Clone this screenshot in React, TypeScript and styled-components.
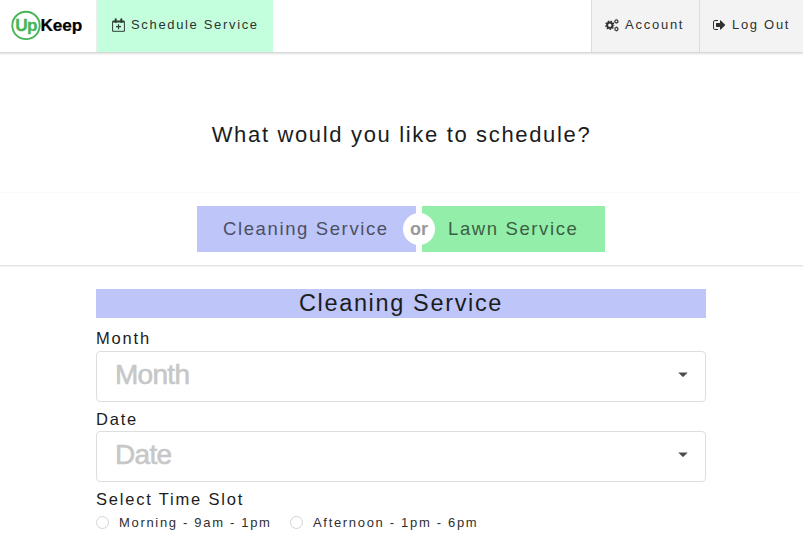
import React from 'react';
import styled, { createGlobalStyle } from 'styled-components';

const GlobalStyle = createGlobalStyle`
  *, *::before, *::after { box-sizing: border-box; }
  html, body { margin: 0; padding: 0; overflow: hidden; }
  body {
    background: #fff;
    color: #1b1c1d;
    font-family: "Liberation Sans", Arial, Helvetica, sans-serif;
  }
`;

const Page = styled.div`
  width: 100%;
  height: 100vh;
  overflow: hidden;
`;

const Header = styled.header`
  display: flex;
  height: 53px;
  border-bottom: 1px solid #d9d9d9;
  box-shadow: 0 1px 2px rgba(34, 36, 38, 0.15);
`;

const Brand = styled.a`
  display: flex;
  align-items: center;
  width: 97px;
  padding-left: 11px;
  border-right: 1px solid #eeeeee;
`;

const NavItem = styled.a<{ $tone: string; $width: number; $divided?: boolean; $spacing: number }>`
  display: flex;
  align-items: center;
  width: ${p => p.$width}px;
  padding: 0 0 3px ${p => (p.$divided ? 13 : 15)}px;
  background: ${p => p.$tone};
  border-left: ${p => (p.$divided ? '1px solid #dcdcdc' : '0')};
  color: #303132;
  font-size: 13px;
  letter-spacing: ${p => p.$spacing}px;
  white-space: nowrap;
  svg { flex: none; }
`;

const NavText = styled.span<{ $gap: number }>`
  margin-left: ${p => p.$gap}px;
`;

const RightMenu = styled.nav`
  display: flex;
  margin-left: auto;
`;

const Question = styled.h1`
  display: flex;
  align-items: center;
  justify-content: center;
  height: 140px;
  margin: 0;
  padding: 24px 0 0 0;
  border-bottom: 1px solid #fafafa;
  font-size: 22px;
  font-weight: 400;
  letter-spacing: 1.66px;
`;

const Choices = styled.section`
  display: flex;
  justify-content: center;
  align-items: flex-start;
  height: 73px;
  padding: 13px 1px 0 0;
  border-bottom: 1px solid #e2e2e3;
  box-shadow: 0 1px 1px rgba(34, 36, 38, 0.06);
`;

const Choice = styled.button<{ $tone: string; $ink: string; $width: number; $left: number }>`
  width: ${p => p.$width}px;
  height: 46px;
  padding: 0 0 1px ${p => p.$left}px;
  border: 0;
  background: ${p => p.$tone};
  color: ${p => p.$ink};
  font: 400 18.5px "Liberation Sans", Arial, sans-serif;
  letter-spacing: 1.62px;
  text-align: left;
  white-space: nowrap;
`;

const OrGap = styled.div`
  position: relative;
  width: 6px;
  height: 46px;
`;

const OrBadge = styled.span`
  position: absolute;
  top: 7px;
  left: -13px;
  width: 32px;
  height: 32px;
  border-radius: 50%;
  background: #fff;
  color: #999;
  font-size: 18px;
  font-weight: 700;
  line-height: 32px;
  text-align: center;
`;

const Form = styled.form`
  width: 610px;
  margin: 23px 0 0 96px;
`;

const FormTitle = styled.h2`
  height: 29px;
  margin: 0 0 9px;
  background: #bec5f9;
  font-size: 23.5px;
  font-weight: 400;
  line-height: 28px;
  letter-spacing: 1.65px;
  text-align: center;
`;

const Field = styled.div`
  height: 80px;
`;

const Label = styled.label<{ $drop?: number }>`
  display: block;
  height: 24px;
  padding-top: ${p => p.$drop ?? 0}px;
  font-size: 16.5px;
  line-height: 23px;
  letter-spacing: 1.8px;
`;

const Dropdown = styled.div`
  display: flex;
  align-items: center;
  justify-content: space-between;
  height: 51px;
  padding: 0 17px 3px 18px;
  border: 1px solid #dedede;
  border-radius: 4px;
  color: #c7c7c7;
  font-size: 28px;
  letter-spacing: -0.7px;
  -webkit-text-stroke: 0.6px #c7c7c7;
`;

const Slots = styled.div`
  display: flex;
  align-items: center;
  height: 22px;
`;

const Slot = styled.label<{ $width: number }>`
  display: flex;
  align-items: center;
  width: ${p => p.$width}px;
  color: #2f2f30;
  font-size: 13px;
  letter-spacing: 1.68px;
  white-space: nowrap;
`;

const Radio = styled.span`
  width: 13px;
  height: 13px;
  margin-right: 10px;
  border: 1px solid #d4d4d5;
  border-radius: 50%;
`;

const Logo = () => (
  <svg width="74" height="32" viewBox="0 0 74 32">
    <circle cx="15" cy="15.4" r="13.7" fill="none" stroke="#45b556" strokeWidth="1.9" />
    <g fontFamily="Liberation Sans, Arial, sans-serif" fontSize="17.2" fontWeight="700">
      <text x="4.2" y="21" textLength="22.2" fill="#45b556" stroke="#45b556" strokeWidth="0.3">Up</text>
      <text x="29.5" y="21" textLength="41.8" fill="#000" stroke="#000" strokeWidth="0.2">Keep</text>
    </g>
  </svg>
);

const CalendarPlus = () => (
  <svg width="13" height="14" viewBox="0 0 13 14" fill="none" stroke="#303c36">
    <path d="M.6 3.2h11.8v10.1H.6z" strokeWidth="1" />
    <path d="M1 3.6h11" strokeWidth="1.8" />
    <path d="M3.7 1.2v2.8M9.3 1.2v2.8" strokeWidth="2" strokeLinecap="round" />
    <path d="M4 8.7h5M6.5 6.2v5" strokeWidth="1.2" />
  </svg>
);

const Gear = ({ x, y, r }: { x: number; y: number; r: number }) => (
  <g fill="none" stroke="#303132" transform={`translate(${x} ${y}) scale(${r})`}>
    <circle r="0.57" strokeWidth="0.42" />
    <circle r="0.85" strokeWidth="0.3" pathLength="16" strokeDasharray="1 1" strokeDashoffset="0.5" />
  </g>
);

const Cogs = () => (
  <svg width="14" height="14" viewBox="0 0 14 14">
    <Gear x={4.8} y={7.2} r={4.7} />
    <Gear x={11.4} y={3.4} r={2.5} />
    <Gear x={11.4} y={11} r={2.5} />
  </svg>
);

const SignOut = () => (
  <svg width="13" height="14" viewBox="0 0 1664 1792" fill="#303132">
    <path d="M640 1440q0 4 1 20t.5 26.5-3 23.5-10 19.5-20.5 6.5h-320q-119 0-203.5-84.5T0 1248V544q0-119 84.5-203.5T288 256h320q13 0 22.5 9.5T640 288q0 4 1 20t.5 26.5-3 23.5-10 19.5T608 384H288q-66 0-113 47t-47 113v704q0 66 47 113t113 47h312l11.5 1 11.5 3 8 5.5 7 9 2 13.5zm928-544q0 26-19 45l-544 544q-19 19-45 19t-45-19-19-45v-288H448q-26 0-45-19t-19-45V704q0-26 19-45t45-19h448V352q0-26 19-45t45-19 45 19l544 544q19 19 19 45z" />
  </svg>
);

const Caret = () => (
  <svg width="10" height="6" viewBox="0 0 10 6">
    <path d="M.9.4h8.2q.6 0 .2.5L5.4 4.8q-.4.4-.8 0L.7.9Q.3.4.9.4z" fill="#4c4c4c" />
  </svg>
);

export default function App() {
  return (
    <Page>
      <GlobalStyle />
      <Header>
        <Brand><Logo /></Brand>
        <NavItem $tone="#c3ffdd" $width={176} $spacing={1.66}>
          <CalendarPlus />
          <NavText $gap={6}>Schedule Service</NavText>
        </NavItem>
        <RightMenu>
          <NavItem $tone="#f3f3f3" $width={108} $divided $spacing={1.75}>
            <Cogs />
            <NavText $gap={6}>Account</NavText>
          </NavItem>
          <NavItem $tone="#f3f3f3" $width={104} $divided $spacing={1.7}>
            <SignOut />
            <NavText $gap={6}>Log Out</NavText>
          </NavItem>
        </RightMenu>
      </Header>
      <Question>What would you like to schedule?</Question>
      <Choices>
        <Choice type="button" $tone="#bec5f9" $ink="#4c4f64" $width={219} $left={26}>Cleaning Service</Choice>
        <OrGap><OrBadge>or</OrBadge></OrGap>
        <Choice type="button" $tone="#93eeaa" $ink="#3b5f44" $width={183} $left={26}>Lawn Service</Choice>
      </Choices>
      <Form>
        <FormTitle>Cleaning Service</FormTitle>
        <Field>
          <Label>Month</Label>
          <Dropdown><span>Month</span><Caret /></Dropdown>
        </Field>
        <Field>
          <Label $drop={1}>Date</Label>
          <Dropdown><span>Date</span><Caret /></Dropdown>
        </Field>
        <Label $drop={1}>Select Time Slot</Label>
        <Slots>
          <Slot $width={194}><Radio />Morning - 9am - 1pm</Slot>
          <Slot $width={200}><Radio />Afternoon - 1pm - 6pm</Slot>
        </Slots>
      </Form>
    </Page>
  );
}
